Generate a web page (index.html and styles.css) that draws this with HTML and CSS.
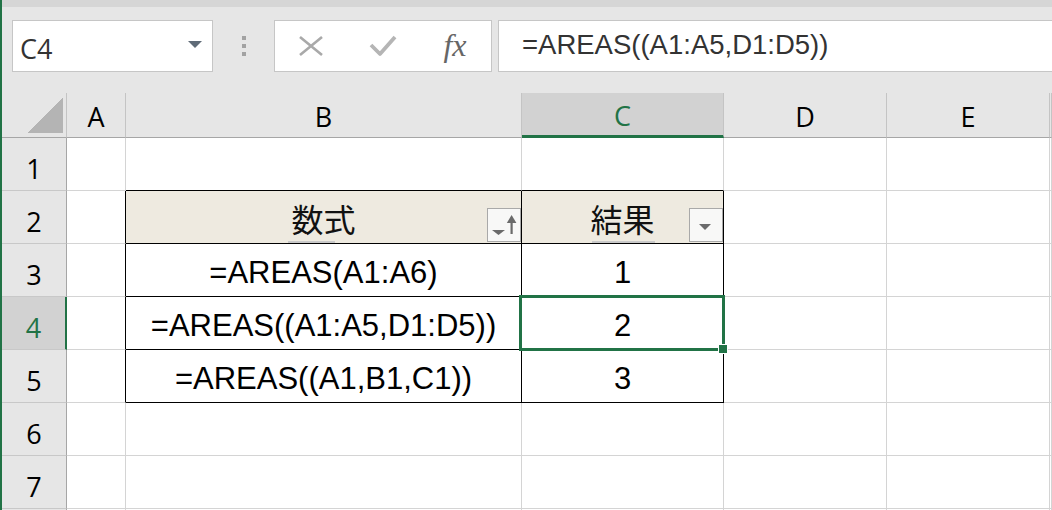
FILE: index.html
```html
<!DOCTYPE html>
<html lang="ja">
<head>
    <meta charset="UTF-8">
    <title>AREAS</title>
    <link rel="stylesheet" href="styles.css">
</head>
<body>
    <div class="window">
        <div class="top-strip"></div>

        <!-- Name box + formula bar -->
        <div class="formula-bar">
            <div class="name-box">
                <span>C4</span>
                <svg width="14" height="7" viewBox="0 0 14 7"><polygon points="0,0 14,0 7,7" fill="#5f6b77"/></svg>
            </div>
            <div class="grip"><i></i><i></i><i></i></div>
            <div class="fx-buttons">
                <div class="fx-slot">
                    <svg width="26" height="22" viewBox="0 0 26 22"><path d="M2 2 L24 20 M24 2 L2 20" stroke="#a9a9a9" stroke-width="2.6" fill="none"/></svg>
                </div>
                <div class="fx-slot">
                    <svg width="28" height="22" viewBox="0 0 28 22"><path d="M2 10 L11 19 L26 2" stroke="#b5b5b5" stroke-width="3.8" fill="none" stroke-linejoin="round"/></svg>
                </div>
                <div class="fx-slot"><span class="fx">fx</span></div>
            </div>
            <div class="formula-input">=AREAS((A1:A5,D1:D5))</div>
        </div>

        <!-- Sheet -->
        <div class="sheet">
            <div class="hd corner"><span class="corner-tri"></span></div>
            <div class="hd col">A</div>
            <div class="hd col">B</div>
            <div class="hd col active-col">C</div>
            <div class="hd col">D</div>
            <div class="hd col">E</div>
            <div class="hd col"></div>

            <div class="hd row">1</div>
            <div class="cell"></div>
            <div class="cell edge-b"></div>
            <div class="cell edge-b"></div>
            <div class="cell"></div>
            <div class="cell"></div>
            <div class="cell"></div>

            <div class="hd row">2</div>
            <div class="cell edge-r"></div>
            <div class="cell tb th">
                <span class="label">数式</span>
                <span class="under under-b"></span>
                <div class="filter-btn">
                    <svg width="32" height="32" viewBox="0 0 32 32">
                        <polygon points="4,21 17,21 10.5,26" fill="#6b6b6b"/>
                        <rect x="22.5" y="11" width="2.2" height="14" fill="#6b6b6b"/>
                        <polygon points="18.8,14 28.4,14 23.6,6" fill="#6b6b6b"/>
                    </svg>
                </div>
            </div>
            <div class="cell tb th">
                <span class="label">結果</span>
                <span class="under under-c"></span>
                <div class="filter-btn">
                    <svg width="32" height="32" viewBox="0 0 32 32"><polygon points="9,15 21,15 15,21" fill="#6b6b6b"/></svg>
                </div>
            </div>
            <div class="cell"></div>
            <div class="cell"></div>
            <div class="cell"></div>

            <div class="hd row">3</div>
            <div class="cell edge-r"></div>
            <div class="cell tb">=AREAS(A1:A6)</div>
            <div class="cell tb">1</div>
            <div class="cell"></div>
            <div class="cell"></div>
            <div class="cell"></div>

            <div class="hd row active-row">4</div>
            <div class="cell edge-r"></div>
            <div class="cell tb">=AREAS((A1:A5,D1:D5))</div>
            <div class="cell tb selected">2<span class="sel-frame"><span class="handle"></span></span></div>
            <div class="cell"></div>
            <div class="cell"></div>
            <div class="cell"></div>

            <div class="hd row">5</div>
            <div class="cell edge-r"></div>
            <div class="cell tb">=AREAS((A1,B1,C1))</div>
            <div class="cell tb">3</div>
            <div class="cell"></div>
            <div class="cell"></div>
            <div class="cell"></div>

            <div class="hd row">6</div>
            <div class="cell"></div>
            <div class="cell"></div>
            <div class="cell"></div>
            <div class="cell"></div>
            <div class="cell"></div>
            <div class="cell"></div>

            <div class="hd row">7</div>
            <div class="cell"></div>
            <div class="cell"></div>
            <div class="cell"></div>
            <div class="cell"></div>
            <div class="cell"></div>
            <div class="cell"></div>

            <!-- next row, only its top edge is in view -->
            <div class="hd row"></div>
            <div class="cell"></div>
            <div class="cell"></div>
            <div class="cell"></div>
            <div class="cell"></div>
            <div class="cell"></div>
            <div class="cell"></div>
        </div>
    </div>
</body>
</html>
```

FILE: styles.css
```css
* {
    box-sizing: border-box;
}
body {
    margin: 0;
    padding: 0;
    overflow: hidden;
    font-family: "Liberation Sans", Arial, sans-serif;
    background-color: #e6e6e6;
}
.window {
    height: 510px;
    border-left: 2px solid #217346;
    overflow: hidden;
}
.top-strip {
    height: 7px;
    background-color: #d6d6d6;
}

/* Formula bar */
.formula-bar {
    display: flex;
    align-items: flex-start;
    height: 86px;
    padding-top: 13px;
    background-color: #e6e6e6;
}
.name-box {
    display: flex;
    align-items: center;
    justify-content: space-between;
    width: 201px;
    height: 52px;
    margin-left: 10px;
    padding: 5px 10px 0 7px;
    background-color: white;
    border: 1px solid #c6c6c6;
    font-family: "Open Sans", sans-serif;
    font-size: 27px;
    color: #333;
}
.name-box svg {
    margin-top: -9px;
}
.grip {
    display: flex;
    flex-direction: column;
    gap: 4px;
    width: 4px;
    margin: 16px 28px 0 29px;
}
.grip i {
    display: block;
    width: 4px;
    height: 4px;
    background-color: #a2a2a2;
}
.fx-buttons {
    display: flex;
    width: 218px;
    height: 52px;
    background-color: white;
    border: 1px solid #c6c6c6;
}
.fx-slot {
    display: flex;
    align-items: center;
    justify-content: center;
    width: 72px;
}
.fx {
    font-family: "Liberation Serif", serif;
    font-style: italic;
    font-size: 32px;
    color: #666;
    margin-top: -2px;
}
.formula-input {
    flex: 1;
    height: 52px;
    margin: 0 -10px 0 6px;
    padding: 8px 0 0 23px;
    background-color: white;
    border: 1px solid #c6c6c6;
    font-size: 27.5px;
    color: #333;
}

/* Grid */
.sheet {
    display: grid;
    grid-template-columns: 65px 59px 396px 202px 163px 163px 1fr;
    grid-template-rows: 45px repeat(8, 53px);
}
.hd {
    display: flex;
    align-items: center;
    justify-content: center;
    background-color: #e6e6e6;
    font-family: "Open Sans", sans-serif;
    font-size: 27px;
    color: black;
}
.hd.col {
    border-right: 1px solid #c4c4c4;
    border-bottom: 1px solid #a6a6a6;
    padding-top: 3px;
}
.hd.corner {
    position: relative;
    border-right: 1px solid #c4c4c4;
    border-bottom: 1px solid #a6a6a6;
}
.corner-tri {
    position: absolute;
    right: 3px;
    bottom: 4px;
    width: 36px;
    height: 36px;
    background: linear-gradient(to bottom right, transparent 50%, #b4b4b4 50%);
}
.hd.row {
    border-right: 1px solid #a6a6a6;
    border-bottom: 1px solid #c8c8c8;
    padding-top: 8px;
}
.hd.active-col {
    background-color: #d2d2d2;
    color: #217346;
    border-bottom: 3px solid #217346;
}
.hd.active-row {
    background-color: #d2d2d2;
    color: #217346;
    border-right: 2px solid #217346;
}

.cell {
    position: relative;
    display: flex;
    align-items: center;
    justify-content: center;
    padding-top: 6px;
    background-color: white;
    border-right: 1px solid #d4d4d4;
    border-bottom: 1px solid #d4d4d4;
    font-size: 31px;
    color: black;
}
.cell.edge-r {
    border-right-color: black;
}
.cell.edge-b {
    border-bottom-color: black;
}
.cell.tb {
    border-right-color: black;
    border-bottom-color: black;
}

/* Table header row */
.cell.th {
    background-color: #eeeae0;
    padding-top: 2px;
}
.th .label {
    font-family: "Noto Sans CJK JP", sans-serif;
    font-size: 32px;
    font-weight: 400;
    color: #111;
}
.th .under {
    position: absolute;
    bottom: 0;
    height: 2px;
    background-color: #c9c9c9;
}
.th .under-b {
    left: 162px;
    width: 47px;
}
.th .under-c {
    left: 70px;
    width: 63px;
}
.filter-btn {
    position: absolute;
    right: 0;
    bottom: 1px;
    width: 34px;
    height: 34px;
    background-color: #f8f8f7;
    border: 1px solid #a9a9a9;
}
.filter-btn svg {
    display: block;
}

/* Active cell */
.sel-frame {
    position: absolute;
    top: -2px;
    left: -3px;
    right: -2px;
    bottom: -2px;
    border: 3px solid #217346;
    z-index: 2;
}
.handle {
    position: absolute;
    right: -6px;
    bottom: -6px;
    width: 10px;
    height: 10px;
    background-color: #217346;
    border: 1px solid white;
}
```
